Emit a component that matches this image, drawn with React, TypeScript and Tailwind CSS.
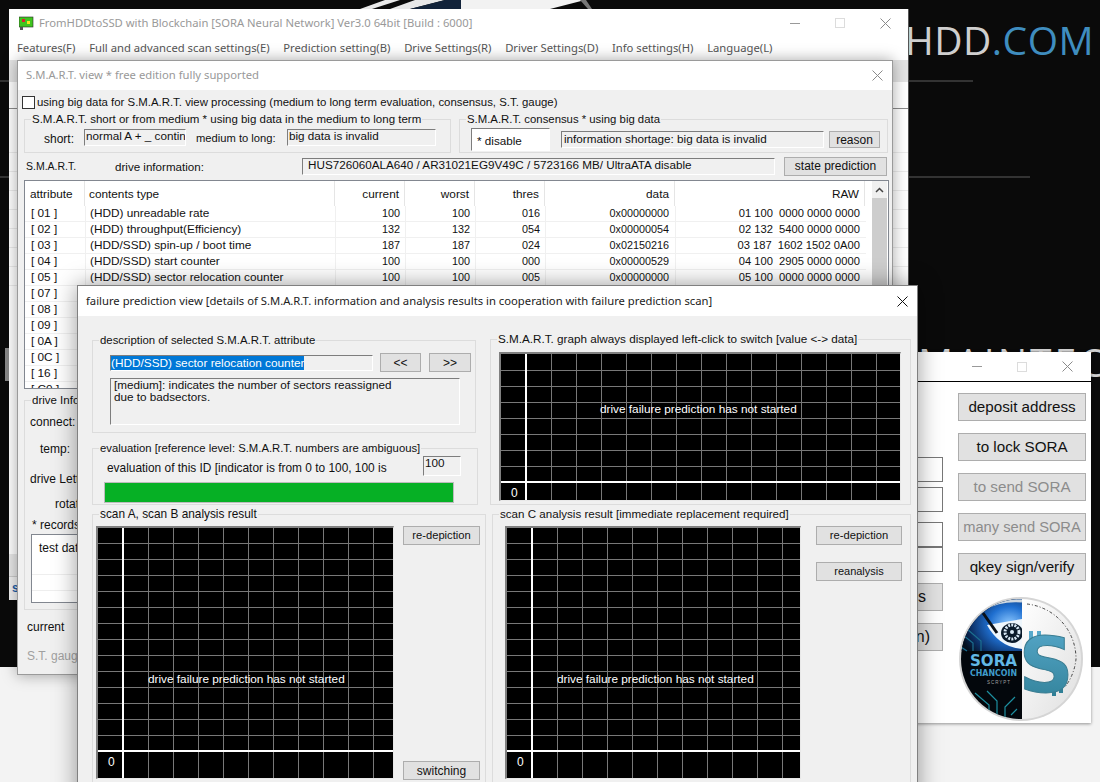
import React from 'react';

const rows = [
  ['[ 01 ]', '(HDD) unreadable rate', '100', '100', '016', '0x00000000', '01 100  0000 0000 0000'],
  ['[ 02 ]', '(HDD) throughput(Efficiency)', '132', '132', '054', '0x00000054', '02 132  5400 0000 0000'],
  ['[ 03 ]', '(HDD/SSD) spin-up / boot time', '187', '187', '024', '0x02150216', '03 187  1602 1502 0A00'],
  ['[ 04 ]', '(HDD/SSD) start counter', '100', '100', '000', '0x00000529', '04 100  2905 0000 0000'],
  ['[ 05 ]', '(HDD/SSD) sector relocation counter', '100', '100', '005', '0x00000000', '05 100  0000 0000 0000'],
  ['[ 07 ]'],
  ['[ 08 ]'],
  ['[ 09 ]'],
  ['[ 0A ]'],
  ['[ 0C ]'],
  ['[ 16 ]'],
  ['[ C0 ]'],
];

const menu = ['Features(F)', 'Full and advanced scan settings(E)', 'Prediction setting(B)', 'Drive Settings(R)', 'Driver Settings(D)', 'Info settings(H)', 'Language(L)'];

function CloseIcon({ color = '#8a8a8a', size = 11 }: { color?: string; size?: number }) {
  return (
    <svg width={size} height={size} viewBox="0 0 11 11" className="block">
      <path d="M0.5 0.5 L10.5 10.5 M10.5 0.5 L0.5 10.5" stroke={color} strokeWidth="1" fill="none" />
    </svg>
  );
}

function WinControls({ gap, pr }: { gap: string; pr: string }) {
  return (
    <div className={`flex items-center ${gap} ${pr}`}>
      <div className="w-[10px] h-px bg-[#999]" />
      <div className="w-[10px] h-[10px] border border-[#dcdcdc]" />
      <CloseIcon />
    </div>
  );
}

function Group({ title, className, legend = 'text-[11.5px]', children }: { title: string; className: string; legend?: string; children?: React.ReactNode }) {
  return (
    <fieldset className={`border border-[#dcdcdc] min-w-0 ${className}`}>
      <legend className={`ml-[6px] px-[1px] leading-[14px] whitespace-nowrap ${legend}`}>{title}</legend>
      {children}
    </fieldset>
  );
}

// leading is passed by each caller, the text sits at different heights in these boxes
function Sunken({ className, children }: { className: string; children?: React.ReactNode }) {
  return (
    <div className={`border-t border-l border-t-[#7d7d7d] border-l-[#7d7d7d] border-b border-r border-b-white border-r-white overflow-hidden whitespace-nowrap text-[11.7px] ${className}`}>
      {children}
    </div>
  );
}

function Btn({ className, children }: { className: string; children: React.ReactNode }) {
  return (
    <div className={`flex items-center justify-center shrink-0 bg-[#e1e1e1] border border-[#adadad] whitespace-nowrap ${className}`}>
      {children}
    </div>
  );
}

function Graph({ w, h, vx, hy, className, textLeft, textTop }: { w: number; h: number; vx: number; hy: number; className: string; textLeft: number; textTop: number }) {
  const vs: number[] = [];
  for (let x = vx + 25; x < w; x += 25) vs.push(x);
  const hs: number[] = [];
  for (let y = hy - 16; y > 0; y -= 16) hs.push(y);
  return (
    <div className={`relative shrink-0 border-t-2 border-l-2 border-t-[#808080] border-l-[#808080] border-r border-b border-r-[#e8e8e8] border-b-[#e8e8e8] bg-black ${className}`} style={{ width: w, height: h }}>
      <svg width={w - 3} height={h - 3} className="block">
        {vs.map((x) => (
          <line key={x} x1={x + 0.5} x2={x + 0.5} y1={0} y2={h} stroke="#787878" />
        ))}
        {hs.map((y) => (
          <line key={y} x1={0} x2={w} y1={y + 0.5} y2={y + 0.5} stroke="#787878" />
        ))}
        <rect x={vx - 1} y={0} width={2} height={h} fill="#fff" />
        <rect x={0} y={hy - 1} width={w} height={2} fill="#fff" />
      </svg>
      <div className="absolute text-white text-[11.8px] leading-[14px] whitespace-nowrap" style={{ left: textLeft, top: textTop }}>
        drive failure prediction has not started
      </div>
      <div className="absolute text-white leading-[14px]" style={{ left: vx - 15, top: hy + 4 }}>
        0
      </div>
    </div>
  );
}

function SoraLogo() {
  return (
    <svg width="124" height="124" viewBox="0 0 124 124" className="block">
      <defs>
        <clipPath id="disc">
          <circle cx="62" cy="62" r="60" />
        </clipPath>
        <radialGradient id="glow" cx="0.8" cy="0.5" r="0.8">
          <stop offset="0" stopColor="#8cc8ff" />
          <stop offset="0.4" stopColor="#1f6fd0" />
          <stop offset="0.8" stopColor="#0a2a5c" />
          <stop offset="1" stopColor="#04101f" />
        </radialGradient>
        <linearGradient id="steel" x1="0" y1="0" x2="1" y2="1">
          <stop offset="0" stopColor="#ffffff" />
          <stop offset="1" stopColor="#dedede" />
        </linearGradient>
        <linearGradient id="teal" x1="0" y1="0" x2="0" y2="1">
          <stop offset="0" stopColor="#58a9cb" />
          <stop offset="1" stopColor="#2f7f96" />
        </linearGradient>
      </defs>
      <circle cx="62" cy="62" r="62" fill="#d5d5d5" />
      <g clipPath="url(#disc)">
        <rect x="0" y="0" width="63" height="124" fill="#03070c" />
        <rect x="0" y="0" width="63" height="54" fill="url(#glow)" />
        <path d="M24 12 Q42 2 63 4" fill="none" stroke="#cfd8e0" strokeWidth="3" />
        <path d="M28 28 L63 22 L63 52 Q40 50 28 28 Z" fill="#eef6fc" />
        <path d="M24 16 L38 36" stroke="#0a1018" strokeWidth="3" />
        <ellipse cx="53" cy="36" rx="11" ry="10" fill="#0a1a2a" />
        <circle cx="53" cy="35" r="7" fill="none" stroke="#d8e8f5" strokeWidth="3" strokeDasharray="2 1.2" />
        <circle cx="53" cy="35" r="2" fill="#d8e8f5" />
        <path d="M4 38 L14 46 L14 54 M8 32 L22 44 L22 54 M2 50 L8 54" stroke="#1b6f8f" strokeWidth="1.2" fill="none" />
        <path d="M30 122 L30 108 L16 96 M38 122 L38 104 L28 94 M46 120 L46 110 L56 100 M52 118 L58 112" stroke="#1d8fa0" strokeWidth="1.2" fill="none" />
        <text x="34.5" y="69" textAnchor="middle" fontFamily="'DejaVu Sans', sans-serif" fontWeight="700" fontSize="15" textLength="47" lengthAdjust="spacingAndGlyphs" fill="#62b8e6">SORA</text>
        <text x="34.5" y="79" textAnchor="middle" fontFamily="'DejaVu Sans', sans-serif" fontWeight="700" fontSize="8" textLength="47" lengthAdjust="spacingAndGlyphs" fill="#3f9ccb">CHANCOIN</text>
        <text x="40" y="87" textAnchor="middle" fontFamily="'Liberation Sans', sans-serif" fontSize="4.5" letterSpacing="1" fill="#a0a0a0">SCRYPT</text>
        <rect x="63" y="0" width="61" height="124" fill="url(#steel)" />
        <path d="M68 7 A55 55 0 0 1 117 62 A55 55 0 0 1 106 90" fill="none" stroke="#444" strokeWidth="1" strokeDasharray="3 2 1 2" />
        <rect x="70" y="34" width="4" height="10" fill="#58a9cb" />
        <rect x="78" y="34" width="4" height="10" fill="#58a9cb" />
        <rect x="93" y="88" width="4" height="11" fill="#2f7f96" />
        <rect x="100" y="88" width="4" height="8" fill="#2f7f96" />
        <text x="87" y="95" textAnchor="middle" fontFamily="'DejaVu Sans', sans-serif" fontWeight="700" fontSize="76" fill="url(#teal)" stroke="#3a7d92" strokeWidth="1">S</text>
      </g>
    </svg>
  );
}

function MainWindow() {
  return (
    <div className="absolute left-[9px] top-[9px] w-[900px] h-[591px] flex flex-col bg-white border-r border-r-[#555]">
      <div className="h-[28px] flex items-center shrink-0">
        <svg width="15" height="15" viewBox="0 0 15 15" className="ml-[10px]">
          <rect x="0" y="1" width="14" height="10" fill="#3fc41f" stroke="#2b2b2b" strokeWidth="0.6" />
          <rect x="3" y="3" width="3" height="3" fill="#e01f2c" />
          <rect x="8" y="5" width="3" height="3" fill="#f6e31c" />
          <rect x="1" y="11" width="3" height="3" fill="#555" />
        </svg>
        <span className="ml-[5px] text-[#999] text-[11.25px] font-['Noto_Sans',sans-serif] whitespace-nowrap">FromHDDtoSSD with Blockchain [SORA Neural Network] Ver3.0 64bit [Build : 6000]</span>
        <div className="ml-auto">
          <WinControls gap="gap-[35px]" pr="pr-[17px]" />
        </div>
      </div>
      <div className="h-[23px] flex items-center gap-[13.7px] pl-[8px] shrink-0 text-[#555] text-[11.25px] font-['Noto_Sans',sans-serif] whitespace-nowrap">
        {menu.map((m) => (
          <span key={m}>{m}</span>
        ))}
      </div>
      <div className="h-[22px] shrink-0 bg-[#e4e4e4]" />
      <div className="h-[27px] shrink-0 border-b border-b-[#8a8a8a]" />
      <div className="h-[44px] shrink-0 border-b border-b-[#ececec]" />
      {[0, 1, 2, 3, 4, 5, 6].map((i) => (
        <div key={i} className="h-[19px] shrink-0 border-b border-b-[#ececec]" />
      ))}
      <div className="flex-1" />
      <div className="h-[22px] shrink-0 bg-[#e8e8e8]" />
      <div className="h-[24px] shrink-0 bg-[#f0f0f0] border-t border-t-[#ccc] pl-[3px] leading-[22px] text-[#1d5fa8] font-bold">s</div>
    </div>
  );
}

function SmartWindow() {
  return (
    <div className="absolute left-[17px] top-[60px] w-[876px] h-[615px] flex flex-col bg-[#f0f0f0] border border-[#9a9a9a] shadow-[0_0_14px_rgba(0,0,0,0.35)]">
      <div className="h-[29px] shrink-0 bg-white flex items-center justify-between pl-[8px] pr-[9px] text-[#999] text-[11.25px] font-['Noto_Sans',sans-serif]">
        <span>S.M.A.R.T. view * free edition fully supported</span>
        <CloseIcon />
      </div>
      <div className="flex items-center mt-[6px] ml-[4px] h-[13px] shrink-0">
        <div className="w-[13px] h-[13px] border border-[#333] bg-white" />
        <span className="ml-[2px] text-[11.4px] whitespace-nowrap">using big data for S.M.A.R.T. view processing (medium to long term evaluation, consensus, S.T. gauge)</span>
      </div>
      <div className="flex gap-[8px] ml-[6px] mt-[3px] shrink-0">
        <Group title="S.M.A.R.T. short or from medium * using big data in the medium to long term" className="w-[427px] h-[41px]">
          <div className="flex items-start mt-[3px]">
            <span className="w-[59px] pl-[19px] mt-px">short:</span>
            <Sunken className="w-[102px] h-[17px] pl-px leading-[11px]">normal A + _ continue</Sunken>
            <span className="w-[91px] ml-[10px] mt-px text-[11.2px] whitespace-nowrap">medium to long:</span>
            <Sunken className="w-[149px] h-[17px] pl-px leading-[11px]">big data is invalid</Sunken>
          </div>
        </Group>
        <Group title="S.M.A.R.T. consensus * using big data" legend="text-[11.35px]" className="w-[429px] h-[41px]">
          <div className="flex items-center mt-[2px] ml-[11px] h-[23px]">
            <Sunken className="w-[79px] h-[23px] bg-white pl-[5px] pt-[6px] leading-[11px]">* disable</Sunken>
            <Sunken className="w-[263px] h-[17px] ml-[11px] pl-[2px] leading-[13px]">information shortage: big data is invalid</Sunken>
            <Btn className="w-[51px] h-[17px] ml-[5px]">reason</Btn>
          </div>
        </Group>
      </div>
      <div className="flex items-center ml-[8px] mt-[4px] h-[19px] shrink-0">
        <span className="w-[89px] text-[10.5px]">S.M.A.R.T.</span>
        <span className="w-[187px] text-[11.6px]">drive information:</span>
        <Sunken className="w-[473px] h-[17px] pl-[5px] leading-[11px]">HUS726060ALA640 / AR31021EG9V49C / 5723166 MB/ UltraATA disable</Sunken>
        <Btn className="w-[103px] h-[19px] ml-[9px] pb-px">state prediction</Btn>
      </div>
      <div className="ml-[6px] mt-[4px] w-[865px] h-[209px] shrink-0 flex bg-white border border-[#828790] overflow-hidden text-[11.8px]">
        <div className="w-[841px] shrink-0">
          <div className="h-[25px] grid grid-cols-[60px_250px_70px_70px_70px_130px_190px] items-center">
            {['attribute', 'contents type', 'current', 'worst', 'thres', 'data', 'RAW'].map((h, i) => (
              <div key={h} className={`h-full flex items-center pt-[2px] border-r border-r-[#e5e5e5] ${i === 0 ? 'pl-[5px]' : i === 1 ? 'pl-[4px]' : 'justify-end pr-[5px]'}`}>{h}</div>
            ))}
          </div>
          {rows.map((r) => (
            <div key={r[0]} className="h-[16px] grid grid-cols-[60px_250px_70px_70px_70px_130px_190px] border-b border-b-[#f0f0f0] leading-[15px]">
              <div className="pl-[6px] whitespace-pre">{r[0]}</div>
              <div className="pl-[4px] border-l border-l-[#f0f0f0]">{r[1]}</div>
              <div className="pr-[5px] text-right text-[10.8px] border-l border-l-[#f0f0f0]">{r[2]}</div>
              <div className="pr-[5px] text-right text-[10.8px] border-l border-l-[#f0f0f0]">{r[3]}</div>
              <div className="pr-[5px] text-right text-[10.8px] border-l border-l-[#f0f0f0]">{r[4]}</div>
              <div className="pr-[6px] text-right text-[10.8px] border-l border-l-[#f0f0f0]">{r[5]}</div>
              <div className="pr-[5px] text-right text-[11.2px] border-l border-l-[#f0f0f0] whitespace-pre">{r[6]}</div>
            </div>
          ))}
        </div>
        <div className="ml-[6px] w-[15px] shrink-0 flex flex-col bg-[#f0f0f0]">
          <div className="h-[17px] flex items-center justify-center">
            <svg width="9" height="6" viewBox="0 0 9 6"><path d="M1 5 L4.5 1.5 L8 5" stroke="#444" strokeWidth="1.5" fill="none" /></svg>
          </div>
          <div className="flex-1 bg-[#cdcdcd]" />
        </div>
      </div>
      <Group title="drive Information" className="ml-[6px] mt-[4px] w-[120px] h-[217px] shrink-0">
        <div className="pl-[5px] leading-[14px] whitespace-nowrap">
          <div className="mt-[8px]">connect:</div>
          <div className="mt-[13px] ml-[10px]">temp:</div>
          <div className="mt-[16px]">drive Letter:</div>
          <div className="mt-[11px] ml-[25px]">rotation:</div>
          <div className="mt-[7px] ml-[2px]">* records</div>
          <div className="mt-[2px] ml-[1px] h-[69px] bg-white border border-[#828790] flex flex-col">
            <div className="h-[40px] pl-[7px] pt-[6px] border-b border-b-[#eee]">test data</div>
            <div className="h-[16px] border-b border-b-[#eee]" />
          </div>
        </div>
      </Group>
      <div className="ml-[9px] mt-[10px] leading-[14px]">current</div>
      <div className="ml-[9px] mt-[15px] leading-[14px] text-[#a0a0a0]">S.T. gauge</div>
    </div>
  );
}

function FailureWindow() {
  return (
    <div className="absolute left-[77px] top-[285px] w-[841px] h-[520px] flex flex-col bg-[#f0f0f0] border border-[#808080] shadow-[0_0_22px_rgba(0,0,0,0.4)]">
      <div className="h-[30px] shrink-0 bg-white flex items-center justify-between pl-[8px] pr-[9px] text-[11.25px] font-['Noto_Sans',sans-serif] text-[#222]">
        <span className="whitespace-nowrap">failure prediction view [details of S.M.A.R.T. information and analysis results in cooperation with failure prediction scan]</span>
        <CloseIcon color="#111" />
      </div>
      <div className="flex">
        <div className="w-[412px] shrink-0 pl-[14px] pt-[17px]">
          <Group title="description of selected S.M.A.R.T. attribute" legend="text-[11.4px]" className="w-[384px] h-[100px]">
            <div className="pl-[17px] pt-[6px]">
              <div className="flex items-center">
                <Sunken className="w-[263px] h-[16px] leading-[13px]">
                  <span className="bg-[#0078d7] text-white text-[11.8px]">(HDD/SSD) sector relocation counter</span>
                </Sunken>
                <Btn className="w-[41px] h-[19px] ml-[7px]">&lt;&lt;</Btn>
                <Btn className="w-[42px] h-[19px] ml-[8px]">&gt;&gt;</Btn>
              </div>
              <Sunken className="w-[350px] h-[47px] mt-[6px] pl-[3px] leading-[12px]">
                [medium]: indicates the number of sectors reassigned
                <br />
                due to badsectors.
              </Sunken>
            </div>
          </Group>
          <Group title="evaluation [reference level: S.M.A.R.T. numbers are ambiguous]" legend="text-[11.3px]" className="w-[386px] h-[64px] mt-[8px]">
            <div className="flex items-start mt-px">
              <span className="w-[330px] pl-[14px] pt-[4px] text-[11.9px] whitespace-nowrap">evaluation of this ID [indicator is from 0 to 100, 100 is</span>
              <Sunken className="w-[38px] h-[20px] pl-px leading-[11px]">100</Sunken>
            </div>
            <div className="ml-[11px] mt-[4px] w-[350px] h-[21px] bg-[#06b025] border border-[#bcbcbc]" />
          </Group>
          <Group title="scan A, scan B analysis result" legend="text-[11.85px]" className="w-[394px] h-[290px] mt-[2px]">
            <div className="flex mt-[5px] ml-[3px]">
              <Graph w={298} h={253} vx={25} hy={223} className="" textLeft={50} textTop={144} />
              <div className="ml-[9px] w-[77px] h-[254px] flex flex-col justify-between">
                <Btn className="w-full h-[19px] text-[11.2px]">re-depiction</Btn>
                <Btn className="w-full h-[19px]">switching</Btn>
              </div>
            </div>
          </Group>
        </div>
        <div className="w-[421px] shrink-0 pt-[16px]">
          <Group title="S.M.A.R.T. graph always displayed left-click to switch [value <-> data]" legend="text-[11.7px]" className="w-[421px] h-[173px]">
            <Graph w={402} h={149} vx={25} hy={128} className="ml-[8px] mt-[6px]" textLeft={99} textTop={48} />
          </Group>
          <Group title="scan C analysis result [immediate replacement required]" legend="text-[11.6px]" className="w-[419px] h-[290px] mt-[2px] ml-[2px]">
            <div className="flex mt-[5px] ml-[12px]">
              <Graph w={296} h={253} vx={25} hy={223} className="" textLeft={50} textTop={144} />
              <div className="ml-[15px] w-[86px] flex flex-col gap-[17px]">
                <Btn className="w-full h-[19px] text-[11.2px]">re-depiction</Btn>
                <Btn className="w-full h-[19px] text-[11px]">reanalysis</Btn>
              </div>
            </div>
          </Group>
        </div>
      </div>
    </div>
  );
}

function SoraWindow() {
  const big = 'w-[128px] h-[28px] text-[15.2px]';
  return (
    <div className="absolute left-[880px] top-[352px] w-[211px] h-[371px] flex flex-col bg-white shadow-[0_1px_3px_rgba(0,0,0,0.4)]">
      <div className="h-[30px] shrink-0 flex items-center justify-end border-b border-b-black">
        <WinControls gap="gap-[35px]" pr="pr-[18px]" />
      </div>
      <div className="flex">
        <div className="w-[63px] shrink-0 flex flex-col pt-[75px] text-[16px]">
          <div className="h-[25px] border border-[#777]" />
          <div className="h-[25px] mt-[5px] border border-[#777]" />
          <div className="h-[25px] mt-[10px] border border-[#777]" />
          <div className="h-[25px] border border-[#777]" />
          <Btn className="h-[28px] mt-[11px] justify-end pr-[16px]">address</Btn>
          <Btn className="h-[28px] mt-[12px] justify-end pr-[12px]">(open)</Btn>
        </div>
        <div className="ml-[15px] pt-[11px] flex flex-col gap-[12px]">
          <Btn className={big}>deposit address</Btn>
          <Btn className={big}>to lock SORA</Btn>
          <Btn className={`${big} bg-[#cbcbcb] text-[#8c8c8c]`}>to send SORA</Btn>
          <Btn className="w-[128px] h-[28px] text-[14.7px] bg-[#cbcbcb] text-[#8c8c8c]">many send SORA</Btn>
          <Btn className={big}>qkey sign/verify</Btn>
          <div className="mt-[4px] ml-px">
            <SoraLogo />
          </div>
        </div>
      </div>
    </div>
  );
}

function Desktop() {
  return (
    <>
      <div className="absolute left-0 right-0 top-[667px] bottom-0 bg-[#f3f3f3]" />
      <div className="absolute left-0 top-[80px] w-[973px] h-[2px] bg-[#333]" />
      <div className="absolute left-0 top-[176px] w-[1030px] h-[2px] bg-[#333]" />
      <div className="absolute left-[5px] top-[348px] w-[4px] h-[33px] bg-[#888]" />
      <div className="absolute left-[905px] top-[13px] text-[39px] tracking-[0.5px] leading-[53px] font-['Open_Sans',sans-serif] text-[#cfcfcf] whitespace-nowrap">
        HDD<span className="text-[#3f8dbf]">.COM</span>
      </div>
      <div className="absolute left-[918px] top-[335px] text-[39px] tracking-[3px] leading-[53px] font-['Open_Sans',sans-serif] text-[#cfcfcf] whitespace-nowrap">MAINTEC</div>
      <svg width="300" height="9" viewBox="0 0 300 9" className="absolute left-[340px] top-0">
        <path d="M20 9 L45 0 L60 0 L32 9 Z M50 9 L75 0 L105 0 L70 9 Z" fill="#e8e8e8" />
        <path d="M70 9 L105 0 L121 0 L121 9 Z" fill="#12233a" />
        <path d="M121 0 L245 0 L210 9 L121 9 Z" fill="#f2f2f2" />
        <path d="M240 0 L246 0 L252 9 L248 9 Z" fill="#777" />
      </svg>
    </>
  );
}

export default function App() {
  return (
    <div className="relative w-[1100px] h-[782px] overflow-hidden bg-[#0a0a0a] text-[12px] text-[#111] font-['Liberation_Sans',sans-serif]">
      <Desktop />
      <MainWindow />
      <SoraWindow />
      <SmartWindow />
      <FailureWindow />
    </div>
  );
}
